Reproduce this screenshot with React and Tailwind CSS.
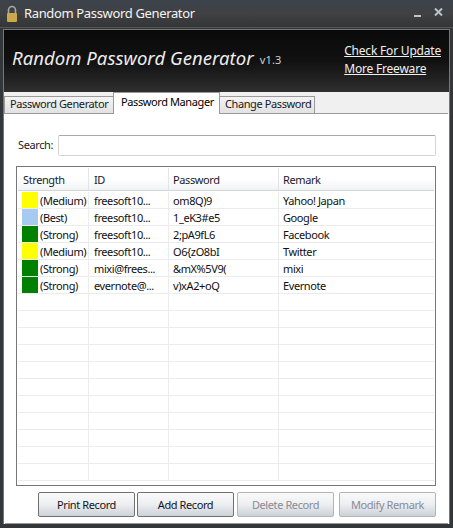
const rows = [
  { color: 'bg-[#ffff00]', strength: '(Medium)', id: 'freesoft10...', password: 'om8Q)9', remark: 'Yahoo! Japan' },
  { color: 'bg-[#a6caf0]', strength: '(Best)', id: 'freesoft10...', password: '1_eK3#e5', remark: 'Google' },
  { color: 'bg-[#008000]', strength: '(Strong)', id: 'freesoft10...', password: '2;pA9fL6', remark: 'Facebook' },
  { color: 'bg-[#ffff00]', strength: '(Medium)', id: 'freesoft10...', password: 'O6{zO8bI', remark: 'Twitter' },
  { color: 'bg-[#008000]', strength: '(Strong)', id: 'mixi@frees...', password: '&mX%5V9(', remark: 'mixi' },
  { color: 'bg-[#008000]', strength: '(Strong)', id: 'evernote@...', password: 'v)xA2+oQ', remark: 'Evernote' },
];

const blanks = Array.from({ length: 11 });

function Lock() {
  return (
    <svg width="12" height="18" viewBox="0 0 12 18" className="shrink-0">
      <path d="M2.5 8V5a3.5 3.5 0 0 1 7 0v3" fill="none" stroke="#a9a9a9" strokeWidth="1.6" />
      <rect x="1" y="8" width="10" height="9" rx="1" fill="#c9a94c" />
    </svg>
  );
}

function Tab({ label, active, width }) {
  if (active) {
    return (
      <div className={`h-[22px] -ml-px z-10 whitespace-nowrap bg-white border border-b-0 border-[#9a9a9a] pl-[7px] pt-[2px] text-black ${width}`}>{label}</div>
    );
  }
  return (
    <div className={`h-[18px] mt-[4px] -ml-px whitespace-nowrap bg-gradient-to-b from-[#f4f4f4] to-[#e2e2e2] border border-[#9a9a9a] pl-[5px] text-[#1a1a1a] ${width}`}>{label}</div>
  );
}

function Btn({ label, disabled, width }) {
  return (
    <div className={`h-[25px] flex items-center justify-center rounded-[2px] border bg-gradient-to-b from-[#fafafa] via-[#eceef0] to-[#ccd2d9] ${width} ${disabled ? 'border-[#b4b4b4] text-[#8a8a96]' : 'border-[#707070] text-[#14141e]'}`}>
      {label}
    </div>
  );
}

export default function App() {
  return (
    <div className="w-[453px] h-[528px] overflow-hidden flex flex-col bg-[#33373a] text-[11px] leading-[14px] tracking-[-0.4px] font-['Noto_Sans',sans-serif]">
      <div className="h-[28px] shrink-0 flex items-center bg-gradient-to-b from-[#3d434c] via-[#3f4143] to-[#333536] border-b border-[#55585a] pl-[6px] pr-[10px]">
        <Lock />
        <div className="ml-[6px] mb-[2px] text-[13px] tracking-[-0.35px] text-[#f4f4f4]">Random Password Generator</div>
        <div className="ml-auto flex items-center">
          <div className="w-[7px] h-[2px] mt-[5px] bg-[#c4c4c4]" />
          <svg width="9" height="8" viewBox="0 0 9 8" className="ml-[13px] mb-[4px]">
            <path d="M1 0.5 L8 7.5 M8 0.5 L1 7.5" stroke="#b8c4cc" strokeWidth="2" />
          </svg>
        </div>
      </div>

      <div className="flex-1 flex flex-col mx-[3px] mb-[4px] mt-[1px] border-l border-r border-[#777] border-t bg-white min-h-0">
        <div className="h-[62px] shrink-0 flex items-center bg-gradient-to-b from-[#0a0a0a] via-[#111] to-[#2f2f2f] pl-[8px] pr-[8px]">
          <div className="mb-[6px] text-[18.5px] tracking-[0.05px] italic text-[#ececec]">Random Password Generator</div>
          <div className="ml-[6px] mb-[3px] text-[11px] tracking-[0.2px] text-[#d0d0d0]">v1.3</div>
          <div className="ml-auto mb-[2px] flex flex-col gap-[4px] text-[12px] tracking-[-0.2px] text-[#f0f0f0] underline">
            <div>Check For Update</div>
            <div>More Freeware</div>
          </div>
        </div>

        <div className="h-[21px] shrink-0 flex pl-px bg-[#f0f0f0] relative">
          <Tab label="Password Generator" width="w-[110px]" />
          <Tab label="Password Manager" active width="w-[107px]" />
          <Tab label="Change Password" width="w-[96px]" />
        </div>

        <div className="flex-1 min-h-0 flex flex-col border-t border-[#9a9a9a] border-b mx-[1px] bg-white pl-[11px] pr-[12px]">
          <div className="mt-[21px] flex items-center">
            <div className="w-[42px] pl-[2px] pb-[2px] text-[#1a1a1a]">Search:</div>
            <div className="flex-1 h-[21px] rounded-[2px] border border-[#d4d4d4] border-t-[#a8a8a8]" />
          </div>

          <div className="mt-[10px] h-[320px] border border-[#777] p-px flex flex-col overflow-hidden">
            <div className="h-[23px] shrink-0 flex bg-gradient-to-b from-white from-50% to-[#f1f2f4] border-b border-[#d5d5d5] text-[#1a1a2a]">
              <div className="w-[71px] pl-[5px] pt-[5px] border-r border-[#e4e4e4]">Strength</div>
              <div className="w-[80px] pl-[5px] pt-[5px] border-r border-[#e4e4e4]">ID</div>
              <div className="w-[110px] pl-[4px] pt-[5px] border-r border-[#e4e4e4]">Password</div>
              <div className="flex-1 pl-[4px] pt-[5px]">Remark</div>
            </div>
            <div className="mt-[1px] flex flex-col">
              {rows.map((r) => (
                <div key={r.remark} className="h-[17px] shrink-0 flex border-b border-[#ececec] text-[#101010]">
                  <div className="w-[71px] flex pl-[4px] border-r border-[#ececec]">
                    <div className={`w-[16px] h-[16px] ${r.color}`} />
                    <div className="ml-[2px] pt-[2px]">{r.strength}</div>
                  </div>
                  <div className="w-[80px] pl-[5px] pt-[2px] border-r border-[#ececec]">{r.id}</div>
                  <div className="w-[110px] pl-[4px] pt-[2px] border-r border-[#ececec]">{r.password}</div>
                  <div className="flex-1 pl-[4px] pt-[2px]">{r.remark}</div>
                </div>
              ))}
              {blanks.map((_, i) => (
                <div key={i} className="h-[17px] shrink-0 flex border-b border-[#ececec]">
                  <div className="w-[71px] border-r border-[#ececec]" />
                  <div className="w-[80px] border-r border-[#ececec]" />
                  <div className="w-[110px] border-r border-[#ececec]" />
                </div>
              ))}
            </div>
          </div>

          <div className="mt-[6px] flex justify-end">
            <Btn label="Print Record" width="w-[97px]" />
            <div className="w-[2px]" />
            <Btn label="Add Record" width="w-[97px]" />
            <div className="w-[3px]" />
            <Btn label="Delete Record" width="w-[97px]" disabled />
            <div className="w-[5px]" />
            <Btn label="Modify Remark" width="w-[97px]" disabled />
          </div>
        </div>
      </div>
    </div>
  );
}
